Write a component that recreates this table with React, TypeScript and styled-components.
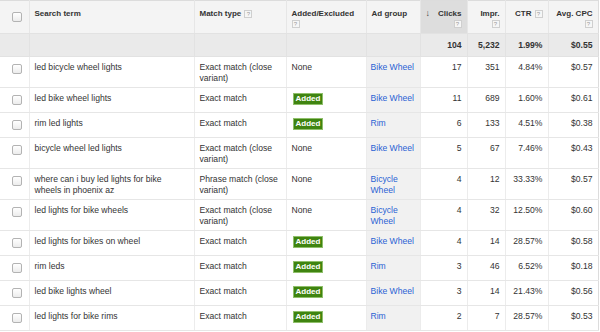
import React from 'react';
import styled, { createGlobalStyle } from 'styled-components';

const GlobalStyle = createGlobalStyle`
  html, body {
    margin: 0;
    padding: 0;
    background: #ffffff;
  }
  body {
    font-family: "Liberation Sans", Arial, sans-serif;
    color: #333;
  }
`;

const Table = styled.table`
  width: 598px;
  table-layout: fixed;
  border-collapse: collapse;
  border-top: 1px solid #dcdcdc;
  border-right: 1px solid #dcdcdc;
  border-bottom: 1px solid #9a9a9a;
  font-size: 8.6px;
`;

const HeadRow = styled.tr`
  height: 33px;
  background: #f4f4f4;
`;

const HeadCell = styled.th<{ $align?: 'left' | 'right'; $sorted?: boolean }>`
  padding: 8px 5px 0 5px;
  vertical-align: top;
  text-align: ${(p) => p.$align || 'left'};
  font-size: 8px;
  line-height: 10px;
  font-weight: bold;
  color: #333;
  background: ${(p) => (p.$sorted ? '#dddddd' : 'transparent')};
  border-left: 1px solid #e6e6e6;
  border-bottom: 1px solid #e2e2e2;

  &:first-child {
    border-left: none;
  }
`;

const SortArrow = styled.span`
  float: left;
  font-size: 9px;
  line-height: 9px;
  color: #444;
`;

const Help = styled.span`
  display: inline-block;
  box-sizing: border-box;
  width: 8px;
  height: 8px;
  margin-left: 3px;
  border: 1px solid #cfcfcf;
  background: #f6f6f6;
  color: #9a9a9a;
  font-size: 6px;
  line-height: 6px;
  font-weight: normal;
  text-align: center;
  vertical-align: middle;
`;

const SummaryRow = styled.tr`
  height: 23px;
  background: #eaeaea;
`;

const SummaryCell = styled.td<{ $align?: 'left' | 'right' }>`
  padding: 0 5px;
  text-align: ${(p) => p.$align || 'left'};
  font-weight: bold;
  color: #333;
  border-left: 1px solid #e2e2e2;
  border-bottom: 1px solid #e2e2e2;

  &:first-child {
    border-left: none;
  }
`;

const Row = styled.tr`
  background: #ffffff;
`;

const Cell = styled.td<{ $align?: 'left' | 'right'; $shade?: boolean; $tight?: boolean }>`
  height: 16px;
  padding: ${(p) => (p.$tight ? '5px 2px 3px 4px' : '5px 5px 3px 5px')};
  vertical-align: top;
  text-align: ${(p) => p.$align || 'left'};
  line-height: 11px;
  color: #333;
  background: ${(p) => (p.$shade ? '#f1f1f1' : 'transparent')};
  border-left: 1px solid #ececec;
  border-bottom: 1px solid #e6e6e6;
  overflow-wrap: break-word;

  &:first-child {
    border-left: none;
  }
`;

const Check = styled.span<{ $head?: boolean }>`
  display: block;
  box-sizing: border-box;
  width: 10px;
  height: 10px;
  margin: ${(p) => (p.$head ? '3px 0 0 7px' : '2px 0 0 7px')};
  border: 1px solid #b3b3b3;
  border-radius: 2px;
  background: linear-gradient(#ffffff, #ececec);
`;

const Badge = styled.span`
  display: inline-block;
  margin-left: 2px;
  padding: 0 2px;
  height: 10px;
  line-height: 10px;
  font-size: 8px;
  font-weight: bold;
  color: #ffffff;
  background: #3f8410;
  outline: 1px solid #8fbf6a;
`;

const GroupLink = styled.a`
  color: #2a62d4;
  text-decoration: none;
`;

type Row = {
  term: string;
  match: string;
  added: boolean;
  group: string;
  clicks: string;
  impr: string;
  ctr: string;
  cpc: string;
};

const rows: Row[] = [
  { term: 'led bicycle wheel lights', match: 'Exact match (close variant)', added: false, group: 'Bike Wheel', clicks: '17', impr: '351', ctr: '4.84%', cpc: '$0.57' },
  { term: 'led bike wheel lights', match: 'Exact match', added: true, group: 'Bike Wheel', clicks: '11', impr: '689', ctr: '1.60%', cpc: '$0.61' },
  { term: 'rim led lights', match: 'Exact match', added: true, group: 'Rim', clicks: '6', impr: '133', ctr: '4.51%', cpc: '$0.38' },
  { term: 'bicycle wheel led lights', match: 'Exact match (close variant)', added: false, group: 'Bike Wheel', clicks: '5', impr: '67', ctr: '7.46%', cpc: '$0.43' },
  { term: 'where can i buy led lights for bike wheels in phoenix az', match: 'Phrase match (close variant)', added: false, group: 'Bicycle Wheel', clicks: '4', impr: '12', ctr: '33.33%', cpc: '$0.57' },
  { term: 'led lights for bike wheels', match: 'Exact match (close variant)', added: false, group: 'Bicycle Wheel', clicks: '4', impr: '32', ctr: '12.50%', cpc: '$0.60' },
  { term: 'led lights for bikes on wheel', match: 'Exact match', added: true, group: 'Bike Wheel', clicks: '4', impr: '14', ctr: '28.57%', cpc: '$0.58' },
  { term: 'rim leds', match: 'Exact match', added: true, group: 'Rim', clicks: '3', impr: '46', ctr: '6.52%', cpc: '$0.18' },
  { term: 'led bike lights wheel', match: 'Exact match', added: true, group: 'Bike Wheel', clicks: '3', impr: '14', ctr: '21.43%', cpc: '$0.56' },
  { term: 'led lights for bike rims', match: 'Exact match', added: true, group: 'Rim', clicks: '2', impr: '7', ctr: '28.57%', cpc: '$0.53' },
];

const widths = [29, 165, 92, 80, 54, 47, 38, 43, 50];

const App: React.FC = () => {
  return (
    <>
      <GlobalStyle />
      <Table>
        <colgroup>
          {widths.map((w, i) => (
            <col key={i} style={{ width: w }} />
          ))}
        </colgroup>
        <thead>
          <HeadRow>
            <HeadCell>
              <Check $head />
            </HeadCell>
            <HeadCell>Search term</HeadCell>
            <HeadCell>
              Match type<Help>?</Help>
            </HeadCell>
            <HeadCell>
              Added/Excluded
              <br />
              <Help style={{ marginLeft: 0 }}>?</Help>
            </HeadCell>
            <HeadCell>Ad group</HeadCell>
            <HeadCell $align="right" $sorted>
              <SortArrow>↓</SortArrow>
              Clicks
              <br />
              <Help>?</Help>
            </HeadCell>
            <HeadCell $align="right">
              Impr.
              <br />
              <Help>?</Help>
            </HeadCell>
            <HeadCell $align="right">
              CTR<Help>?</Help>
            </HeadCell>
            <HeadCell $align="right">
              Avg. CPC
              <br />
              <Help>?</Help>
            </HeadCell>
          </HeadRow>
        </thead>
        <tbody>
          <SummaryRow>
            <SummaryCell />
            <SummaryCell />
            <SummaryCell />
            <SummaryCell />
            <SummaryCell />
            <SummaryCell $align="right">104</SummaryCell>
            <SummaryCell $align="right">5,232</SummaryCell>
            <SummaryCell $align="right">1.99%</SummaryCell>
            <SummaryCell $align="right">$0.55</SummaryCell>
          </SummaryRow>
          {rows.map((r) => (
            <Row key={r.term}>
              <Cell>
                <Check />
              </Cell>
              <Cell>{r.term}</Cell>
              <Cell>{r.match}</Cell>
              <Cell>{r.added ? <Badge>Added</Badge> : 'None'}</Cell>
              <Cell $shade $tight>
                <GroupLink href="#">{r.group}</GroupLink>
              </Cell>
              <Cell $align="right">{r.clicks}</Cell>
              <Cell $align="right">{r.impr}</Cell>
              <Cell $align="right">{r.ctr}</Cell>
              <Cell $align="right">{r.cpc}</Cell>
            </Row>
          ))}
        </tbody>
      </Table>
    </>
  );
};

export default App;
